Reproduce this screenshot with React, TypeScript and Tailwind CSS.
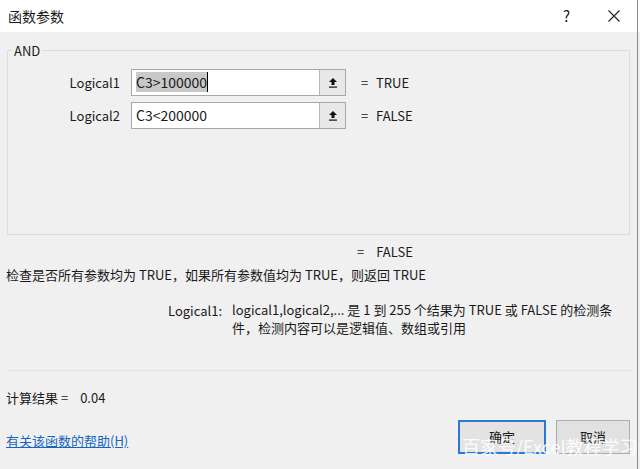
import React from 'react';

const font = { fontFamily: '"Noto Sans CJK SC", "Noto Sans", sans-serif' };

function RefButton() {
  return (
    <div className="flex h-full w-[26px] items-center justify-center border-l border-[#b8b8b8] bg-[#e8e8e8]">
      <svg width="10" height="11" viewBox="0 0 10 11">
        <path d="M5 1 L1 5 H3.5 V8 H6.5 V5 H9 Z" fill="#111" />
        <rect x="1" y="9.5" width="8" height="1.2" fill="#111" />
      </svg>
    </div>
  );
}

function ArgRow({ label, value, result, selected }: { label: string; value: string; result: string; selected?: boolean }) {
  return (
    <div className="flex h-[27px] items-center">
      <div className="w-[123px] pr-[11px] text-right">{label}</div>
      <div className="flex h-full w-[215px] items-center border border-[#a8a8a8] bg-white text-[14px]">
        <div className="flex-1 pl-[4px]">
          {selected ? (
            <span className="border-r border-black bg-[#c8c8c8]">{value}</span>
          ) : (
            value
          )}
        </div>
        <RefButton />
      </div>
      <div className="ml-[15px] w-[15px]">=</div>
      <div>{result}</div>
    </div>
  );
}

export default function App() {
  return (
    <div className="relative h-[469px] w-[640px] overflow-hidden bg-[#f0f0f0] text-[13px] text-[#1a1a1a]" style={font}>
      <div className="flex h-[32px] items-center bg-white pl-[8px] pr-[20px] text-[14px]">
        <span className="flex-1">函数参数</span>
        <span className="mr-[38px] text-[15px]">?</span>
        <svg width="12" height="12" viewBox="0 0 12 12">
          <path d="M0.5 0.5 L11.5 11.5 M11.5 0.5 L0.5 11.5" stroke="#222" strokeWidth="1.1" />
        </svg>
      </div>
      <div className="absolute right-[2px] top-0 h-full w-px bg-[#8a8a8a]" />

      <div className="relative mx-[7px] mt-[18px] h-[185px] w-[623px] border border-[#dcdcdc] pt-[18px]">
        <span className="absolute -top-[10px] left-[4px] bg-[#f0f0f0] px-[2px]">AND</span>
        <div className="flex flex-col gap-[6px]">
          <ArgRow label="Logical1" value="C3>100000" result="TRUE" selected />
          <ArgRow label="Logical2" value="C3<200000" result="FALSE" />
        </div>
      </div>

      <div className="mt-[7px] pl-[357px]">
        <span className="mr-[12px]">=</span>FALSE
      </div>
      <div className="mt-[3px] pl-[6px]">检查是否所有参数均为 TRUE，如果所有参数值均为 TRUE，则返回 TRUE</div>

      <div className="mt-[17px] flex pl-[168px]">
        <div className="w-[64px]">Logical1:</div>
        <div className="w-[402px] leading-[18px]">
          logical1,logical2,... 是 1 到 255 个结果为 TRUE 或 FALSE 的检测条件，检测内容可以是逻辑值、数组或引用
        </div>
      </div>

      <div className="mx-[7px] mt-[33px] h-px bg-[#e2e2e2]" />

      <div className="mt-[17px] pl-[6px]">
        计算结果 =<span className="ml-[12px]">0.04</span>
      </div>

      <div className="mt-[12px] flex items-center pl-[6px] pr-[10px]">
        <span className="flex-1 pt-[8px] text-[#1565c0] underline">有关该函数的帮助(H)</span>
        <div className="flex h-[34px] w-[88px] items-center justify-center border-2 border-[#2a7ad4] bg-[#e3e3e3]">确定</div>
        <div className="ml-[10px] flex h-[34px] w-[74px] items-center justify-center border border-[#adadad] bg-[#e1e1e1]">取消</div>
      </div>

      <div className="absolute left-[462px] top-[435px] whitespace-nowrap text-[18px] leading-[22px] text-white/85">百家号/Excel教程学习</div>
    </div>
  );
}
